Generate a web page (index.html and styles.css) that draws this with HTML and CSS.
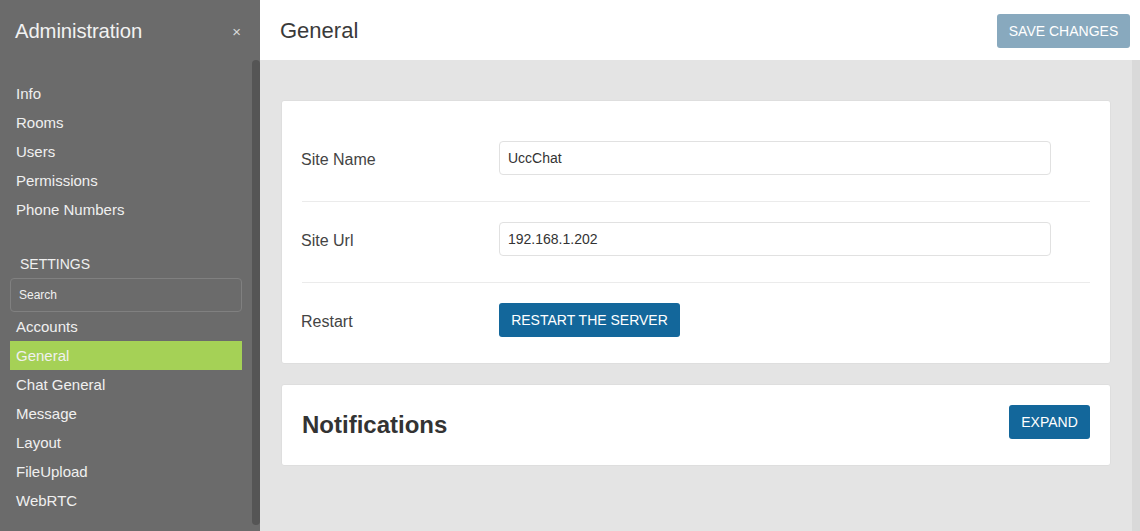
FILE: index.html
```html
<!DOCTYPE html>
<html>
<head>
<meta charset="utf-8">
<link rel="stylesheet" href="styles.css">
</head>
<body>
<div class="app">
  <aside class="sidebar">
    <div class="side-head">
      <span class="side-title">Administration</span>
      <span class="side-close">×</span>
    </div>
    <div class="side-body">
      <nav class="side-nav">
        <div class="item">Info</div>
        <div class="item">Rooms</div>
        <div class="item">Users</div>
        <div class="item">Permissions</div>
        <div class="item">Phone Numbers</div>
        <div class="section">SETTINGS</div>
        <div class="search">Search</div>
        <div class="item">Accounts</div>
        <div class="item active">General</div>
        <div class="item">Chat General</div>
        <div class="item">Message</div>
        <div class="item">Layout</div>
        <div class="item">FileUpload</div>
        <div class="item">WebRTC</div>
      </nav>
      <div class="side-thumb"></div>
    </div>
  </aside>
  <main class="main">
    <header class="main-head">
      <h1 class="main-title">General</h1>
      <button class="btn btn-save">SAVE CHANGES</button>
    </header>
    <div class="main-body">
      <div class="content">
        <section class="card">
          <div class="row">
            <label class="label">Site Name</label>
            <div class="input">UccChat</div>
          </div>
          <div class="row">
            <label class="label">Site Url</label>
            <div class="input">192.168.1.202</div>
          </div>
          <div class="row">
            <label class="label">Restart</label>
            <div><button class="btn btn-primary">RESTART THE SERVER</button></div>
          </div>
        </section>
        <section class="card card-collapsed">
          <h2 class="card-title">Notifications</h2>
          <button class="btn btn-primary">EXPAND</button>
        </section>
      </div>
      <div class="main-track"></div>
    </div>
  </main>
</div>
</body>
</html>
```

FILE: styles.css
```css
* { box-sizing: border-box; }
html, body { margin: 0; padding: 0; }
body {
  font-family: "Liberation Sans", Arial, sans-serif;
  width: 1140px;
  height: 531px;
  overflow: hidden;
}
.app { display: flex; height: 531px; }

.sidebar {
  width: 260px;
  flex: none;
  background: #6b6b6b;
  color: #efefef;
  display: flex;
  flex-direction: column;
}
.side-head {
  height: 60px;
  display: flex;
  align-items: center;
  justify-content: space-between;
  padding: 2px 19px 0 15px;
}
.side-title { font-size: 20.3px; color: #f2f2f2; letter-spacing: -0.1px; }
.side-close { font-size: 15px; color: #d8d8d8; }
.side-body { flex: 1; display: flex; min-height: 0; }
.side-nav { width: 252px; padding: 19px 10px 0; }
.side-thumb {
  width: 8px;
  height: 465px;
  background: #555555;
  border-radius: 4px;
}
.item {
  height: 29px;
  line-height: 29px;
  font-size: 15px;
  padding-left: 6px;
  color: #f0f0f0;
}
.item.active { background: #a5d156; }
.section {
  margin-top: 26px;
  height: 28px;
  line-height: 28px;
  font-size: 14px;
  padding-left: 10px;
  color: #f0f0f0;
}
.search {
  height: 34px;
  line-height: 32px;
  border: 1px solid #808080;
  border-radius: 4px;
  font-size: 12px;
  padding-left: 8px;
  color: #f0f0f0;
}

.main { flex: 1; display: flex; flex-direction: column; min-width: 0; }
.main-head {
  height: 60px;
  background: #fff;
  display: flex;
  align-items: center;
  justify-content: space-between;
  padding: 1px 10px 0 20px;
}
.main-title { margin: 0; font-size: 22px; font-weight: normal; color: #3a3a3a; }
.btn {
  font-family: inherit;
  font-size: 14px;
  color: #fff;
  border: 0;
  border-radius: 3px;
  height: 34px;
  padding: 0 12px;
  cursor: pointer;
}
.btn-save { background: #88a9be; width: 133px; padding: 0; }
.btn-primary { background: #13679b; }

.main-body { flex: 1; display: flex; background: #e4e4e4; }
.content { flex: 1; padding: 40px 21px 0 21px; }
.main-track { width: 8px; background: #d9d9d9; }

.card {
  background: #fff;
  border: 1px solid #dedede;
  border-radius: 3px;
  padding: 20px 20px 0;
  margin-bottom: 20px;
}
.row {
  display: grid;
  grid-template-columns: 25% 70%;
  align-items: center;
  padding: 20px 0 26px;
  border-bottom: 1px solid #ebebeb;
}
.row:last-child { border-bottom: 0; }
.label { font-size: 16px; color: #444; padding-top: 3px; margin-left: -1px; }
.input {
  height: 34px;
  line-height: 33px;
  border: 1px solid #e1e1e1;
  border-radius: 4px;
  padding-left: 8px;
  font-size: 14px;
  color: #333;
}
.row .btn-primary { width: 181px; padding: 0; }
.card-collapsed {
  display: flex;
  align-items: center;
  justify-content: space-between;
  padding: 20px 20px 26px;
}
.card-title { margin: 0; font-size: 24px; font-weight: bold; color: #333; padding-top: 5px; }
.card-collapsed .btn-primary { width: 81px; padding: 0; }
```
